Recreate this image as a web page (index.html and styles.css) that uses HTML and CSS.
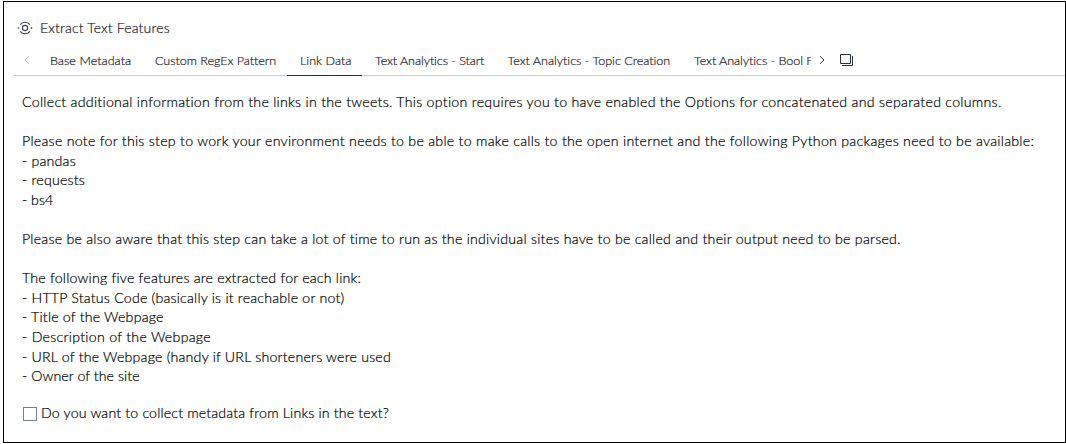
FILE: index.html
```html
<!DOCTYPE html>
<html lang="en">
<head>
<meta charset="utf-8">
<title>Extract Text Features</title>
<link rel="stylesheet" href="styles.css">
</head>
<body>
<main class="panel">
  <header class="header">
    <svg class="step-icon" width="16" height="14" viewBox="0 0 16 14" fill="none" stroke="#3a3f4b">
      <circle cx="8" cy="7" r="2.6" stroke-width="1.1"/>
      <path d="M3.2 3.7C5.6.5 10.4.5 12.8 3.7M3.2 10.3c2.4 3.2 7.2 3.2 9.6 0" stroke-width="1.1"/>
      <path d="M.8 7h1.5M13.7 7h1.5" stroke-width="1.5"/>
    </svg>
    <h1 class="title">Extract Text Features</h1>
  </header>
  <nav class="tabbar">
    <svg class="prev" width="6" height="10" viewBox="0 0 6 10" fill="none" stroke="#b9bdc7"><path d="M5 1.2 1 5l4 3.8"/></svg>
    <div class="tabs">
      <span class="tab tab-base">Base Metadata</span>
      <span class="tab tab-regex">Custom RegEx Pattern</span>
      <span class="tab tab-link active">Link Data</span>
      <span class="tab tab-start">Text Analytics - Start</span>
      <span class="tab tab-topic">Text Analytics - Topic Creation</span>
      <span class="tab tab-bool">Text Analytics - Bool F</span>
    </div>
    <svg class="next" width="6" height="10" viewBox="0 0 6 10" fill="none" stroke="#2d323e"><path d="M1 1.2 5 5 1 8.8"/></svg>
    <svg class="tablist" width="13" height="12" viewBox="0 0 13 12" fill="none" stroke="#2d323e"><path d="M.5.5h10v9H.5z"/><path d="M2 11.5h10.5V2" /></svg>
  </nav>
  <section class="content">
    <p class="line l1">Collect additional information from the links in the tweets. This option requires you to have enabled the Options for concatenated and separated columns.</p>
    <p class="line gap l2">Please note for this step to work your environment needs to be able to make calls to the open internet and the following Python packages need to be available:</p>
    <p class="line l3">- pandas</p>
    <p class="line l4">- requests</p>
    <p class="line l5">- bs4</p>
    <p class="line gap l6">Please be also aware that this step can take a lot of time to run as the individual sites have to be called and their output need to be parsed.</p>
    <p class="line gap l7">The following five features are extracted for each link:</p>
    <p class="line l8">- HTTP Status Code (basically is it reachable or not)</p>
    <p class="line l9">- Title of the Webpage</p>
    <p class="line l10">- Description of the Webpage</p>
    <p class="line l11">- URL of the Webpage (handy if URL shorteners were used</p>
    <p class="line l12">- Owner of the site</p>
    <label class="option"><input class="check" type="checkbox"><span class="option-text">Do you want to collect metadata from Links in the text?</span></label>
  </section>
</main>
</body>
</html>
```
FILE: styles.css
```css
* { box-sizing: border-box; }
body { margin: 0; padding: 1px 0 0 3px; background: #fff; font-family: Lato, "Open Sans", sans-serif; font-weight: 300; font-variant-ligatures: none; color: #000; overflow: hidden; -webkit-text-stroke: 0.2px; }
.panel { width: 1063px; height: 442px; border: 1px solid #000; padding: 16px 0 0 10px; }
.header { display: flex; align-items: center; height: 20px; padding-left: 3px; }
.step-icon { margin-right: 7px; }
.title { margin: 0; font-size: 14px; font-weight: 300; line-height: 20px; letter-spacing: 0.17px; color: #1c202b; white-space: nowrap; }
.tabbar { display: flex; height: 38px; border-bottom: 1px solid #c9cbd2; padding-left: 10px; }
.prev { margin: 17px 7px 0 0; }
.tabs { display: flex; width: 774px; height: 38px; overflow: hidden; flex: none; }
.tab { flex: none; padding: 13px 0 0 13px; font-size: 12.6px; line-height: 20px; color: #1c202b; white-space: nowrap; }
.tab-base { width: 105px; letter-spacing: 0.02px; }
.tab-regex { width: 133px; letter-spacing: -0.04px; }
.tab-link { width: 75px; margin-left: 12px; }
.tab-start { width: 132px; letter-spacing: -0.09px; }
.tab-topic { width: 187px; padding-left: 13.5px; letter-spacing: -0.02px; }
.tab-bool { letter-spacing: -0.07px; }
.active { border-bottom: 1px solid #2d323e; }
.next { margin: 17px 15px 0 8px; }
.tablist { margin-top: 16px; }
.content { padding: 16px 0 0 8px; }
.line { margin: 0; font-size: 14.2px; line-height: 19.58px; letter-spacing: 0.2px; white-space: nowrap; }
.gap { margin-top: 19.58px; }
.l1 { letter-spacing: 0.27px; }
.l2 { letter-spacing: 0.265px; }
.l5 { letter-spacing: 0; }
.l6 { letter-spacing: 0.237px; }
.l10 { letter-spacing: 0.27px; }
.l12 { letter-spacing: 0.06px; }
.option { display: flex; align-items: center; margin-top: 18px; height: 20px; }
.check { appearance: none; width: 14px; height: 14px; margin: 0 4px 0 1px; border: 1px solid #747f95; background: #fff; }
.option-text { padding-bottom: 2px; font-size: 14.2px; line-height: 20px; letter-spacing: 0.16px; white-space: nowrap; }
```
